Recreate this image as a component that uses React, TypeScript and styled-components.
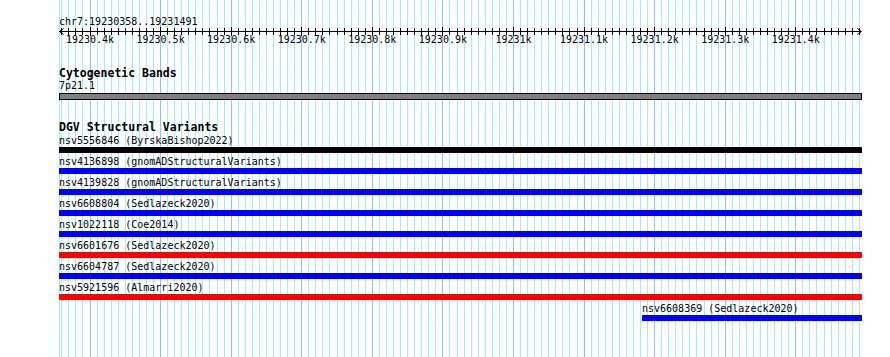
import React from 'react';
import styled, { createGlobalStyle } from 'styled-components';

// view geometry (page pixels)
const TRACK_LEFT = 59;
const TRACK_WIDTH = 803;
const PAGE_W = 890;
const PAGE_H = 357;
const ORIGIN_BP = 19230400; // sits at x=90
const ORIGIN_X = 90;
const PX_PER_BP = 0.7058;
const FIRST_TICK = 19230360;
const LAST_TICK = 19231490;

const MINOR_GRID = '#a4eef2';
const MAJOR_GRID = '#88c6ee';

const bpToX = (bp: number) => ORIGIN_X + (bp - ORIGIN_BP) * PX_PER_BP;
const snap = (x: number) => Math.floor(x) + 0.5;

type Feature = { name: string; source: string; start: number; end: number; color: string };

const features: Feature[] = [
  { name: 'nsv5556846', source: 'ByrskaBishop2022', start: 19229000, end: 19233000, color: '#000000' },
  { name: 'nsv4136898', source: 'gnomADStructuralVariants', start: 19229000, end: 19233000, color: '#0000ff' },
  { name: 'nsv4139828', source: 'gnomADStructuralVariants', start: 19229000, end: 19233000, color: '#0000ff' },
  { name: 'nsv6608804', source: 'Sedlazeck2020', start: 19229000, end: 19233000, color: '#0000ff' },
  { name: 'nsv1022118', source: 'Coe2014', start: 19229000, end: 19233000, color: '#0000ff' },
  { name: 'nsv6601676', source: 'Sedlazeck2020', start: 19229000, end: 19233000, color: '#ff0000' },
  { name: 'nsv6604787', source: 'Sedlazeck2020', start: 19229000, end: 19233000, color: '#0000ff' },
  { name: 'nsv5921596', source: 'Almarri2020', start: 19229000, end: 19233000, color: '#ff0000' },
  { name: 'nsv6608369', source: 'Sedlazeck2020', start: 19231182, end: 19233000, color: '#0000ff' },
];

const GlobalStyle = createGlobalStyle`
  * {
    box-sizing: border-box;
    margin: 0;
    padding: 0;
  }

  body {
    font-family: 'DejaVu Sans Mono', 'Liberation Mono', monospace;
    background-color: #ffffff;
    color: #000000;
  }
`;

const Page = styled.div`
  position: relative;
  width: ${PAGE_W}px;
  height: ${PAGE_H}px;
  overflow: hidden;
  background: #ffffff;
`;

/* grid lines sit behind every track */
const GridLayer = styled.svg`
  position: absolute;
  left: 0;
  top: 0;
  z-index: 0;
`;

const Tracks = styled.div`
  position: relative;
  z-index: 1;
  width: ${TRACK_LEFT + TRACK_WIDTH}px;
  padding: 16px 0 0 ${TRACK_LEFT}px;
`;

const LocusLabel = styled.div`
  font-size: 10px;
  line-height: 11px;
  height: 11px;
  white-space: nowrap;
`;

const RulerSvg = styled.svg`
  display: block;
  width: ${TRACK_WIDTH}px;
  height: 18px;
  overflow: visible;
`;

const TrackSection = styled.section<{ $gap: number }>`
  margin-top: ${(p) => p.$gap}px;
  display: flex;
  flex-direction: column;
`;

const TrackTitle = styled.h3`
  font-size: 11.5px;
  font-weight: bold;
  line-height: 12px;
  height: 12px;
  white-space: nowrap;
`;

const FeatureLabel = styled.div`
  font-size: 10px;
  line-height: 13px;
  height: 13px;
  white-space: nowrap;
`;

const Band = styled.div`
  width: ${TRACK_WIDTH}px;
  height: 7px;
  margin-top: 1px;
  border: 1px solid #000000;
  background: #808080;
`;

const FeatureList = styled.div`
  display: flex;
  flex-direction: column;
  margin-top: 1px;
`;

const FeatureRow = styled.div`
  display: flex;
  flex-direction: column;
  margin-bottom: 2px;
`;

const Bar = styled.div<{ $color: string }>`
  height: 6px;
  background: ${(p) => p.$color};
`;

const GridLines: React.FC = () => {
  const lines: React.ReactNode[] = [
    <line key="edge" x1={TRACK_LEFT + 0.5} x2={TRACK_LEFT + 0.5} y1={0} y2={PAGE_H} stroke={MINOR_GRID} />,
  ];
  for (let bp = FIRST_TICK; bp <= LAST_TICK; bp += 10) {
    const x = snap(bpToX(bp));
    const major = bp % 100 === 0;
    lines.push(
      <line key={bp} x1={x} x2={x} y1={0} y2={PAGE_H} stroke={major ? MAJOR_GRID : MINOR_GRID} />
    );
  }
  return (
    <GridLayer width={PAGE_W} height={PAGE_H} shapeRendering="crispEdges">
      {lines}
    </GridLayer>
  );
};

const formatKb = (bp: number) => `${(bp / 1000).toFixed(1).replace(/\.0$/, '')}k`;

const Ruler: React.FC = () => {
  const ticks: React.ReactNode[] = [];
  const labels: React.ReactNode[] = [];
  for (let bp = FIRST_TICK; bp <= LAST_TICK; bp += 10) {
    const x = snap(bpToX(bp)) - TRACK_LEFT;
    const major = bp % 100 === 0;
    ticks.push(
      <line key={bp} x1={x} x2={x} y1={major ? 0 : 1} y2={major ? 9 : 8} stroke="#000" />
    );
    if (major) {
      labels.push(
        <text key={bp} x={bpToX(bp) - TRACK_LEFT} y={16} textAnchor="middle">
          {formatKb(bp)}
        </text>
      );
    }
  }
  return (
    <RulerSvg viewBox={`0 0 ${TRACK_WIDTH} 18`}>
      <g shapeRendering="crispEdges">
        <line x1={0} x2={TRACK_WIDTH - 1} y1={4.5} y2={4.5} stroke="#000" />
        {ticks}
      </g>
      <polyline points="4.5,1.5 0.5,4.5 4.5,7.5" fill="none" stroke="#000" />
      <polyline points="798.5,1.5 802.5,4.5 798.5,7.5" fill="none" stroke="#000" />
      <g fontFamily="'DejaVu Sans Mono', 'Liberation Mono', monospace" fontSize="10" fill="#000">
        {labels}
      </g>
    </RulerSvg>
  );
};

const FeatureItem: React.FC<{ f: Feature }> = ({ f }) => {
  const left = Math.max(0, Math.round(bpToX(f.start)) - TRACK_LEFT);
  const right = Math.min(TRACK_WIDTH, Math.round(bpToX(f.end)) - TRACK_LEFT);
  return (
    <FeatureRow style={{ marginLeft: left, width: right - left }}>
      <FeatureLabel>
        {f.name} ({f.source})
      </FeatureLabel>
      <Bar $color={f.color} />
    </FeatureRow>
  );
};

export default function App() {
  return (
    <Page>
      <GlobalStyle />
      <GridLines />
      <Tracks>
        <LocusLabel>chr7:19230358..19231491</LocusLabel>
        <Ruler />

        <TrackSection $gap={22}>
          <TrackTitle>Cytogenetic Bands</TrackTitle>
          <FeatureLabel>7p21.1</FeatureLabel>
          <Band />
        </TrackSection>

        <TrackSection $gap={21}>
          <TrackTitle>DGV Structural Variants</TrackTitle>
          <FeatureList>
            {features.map((f) => (
              <FeatureItem key={f.name} f={f} />
            ))}
          </FeatureList>
        </TrackSection>
      </Tracks>
    </Page>
  );
}
